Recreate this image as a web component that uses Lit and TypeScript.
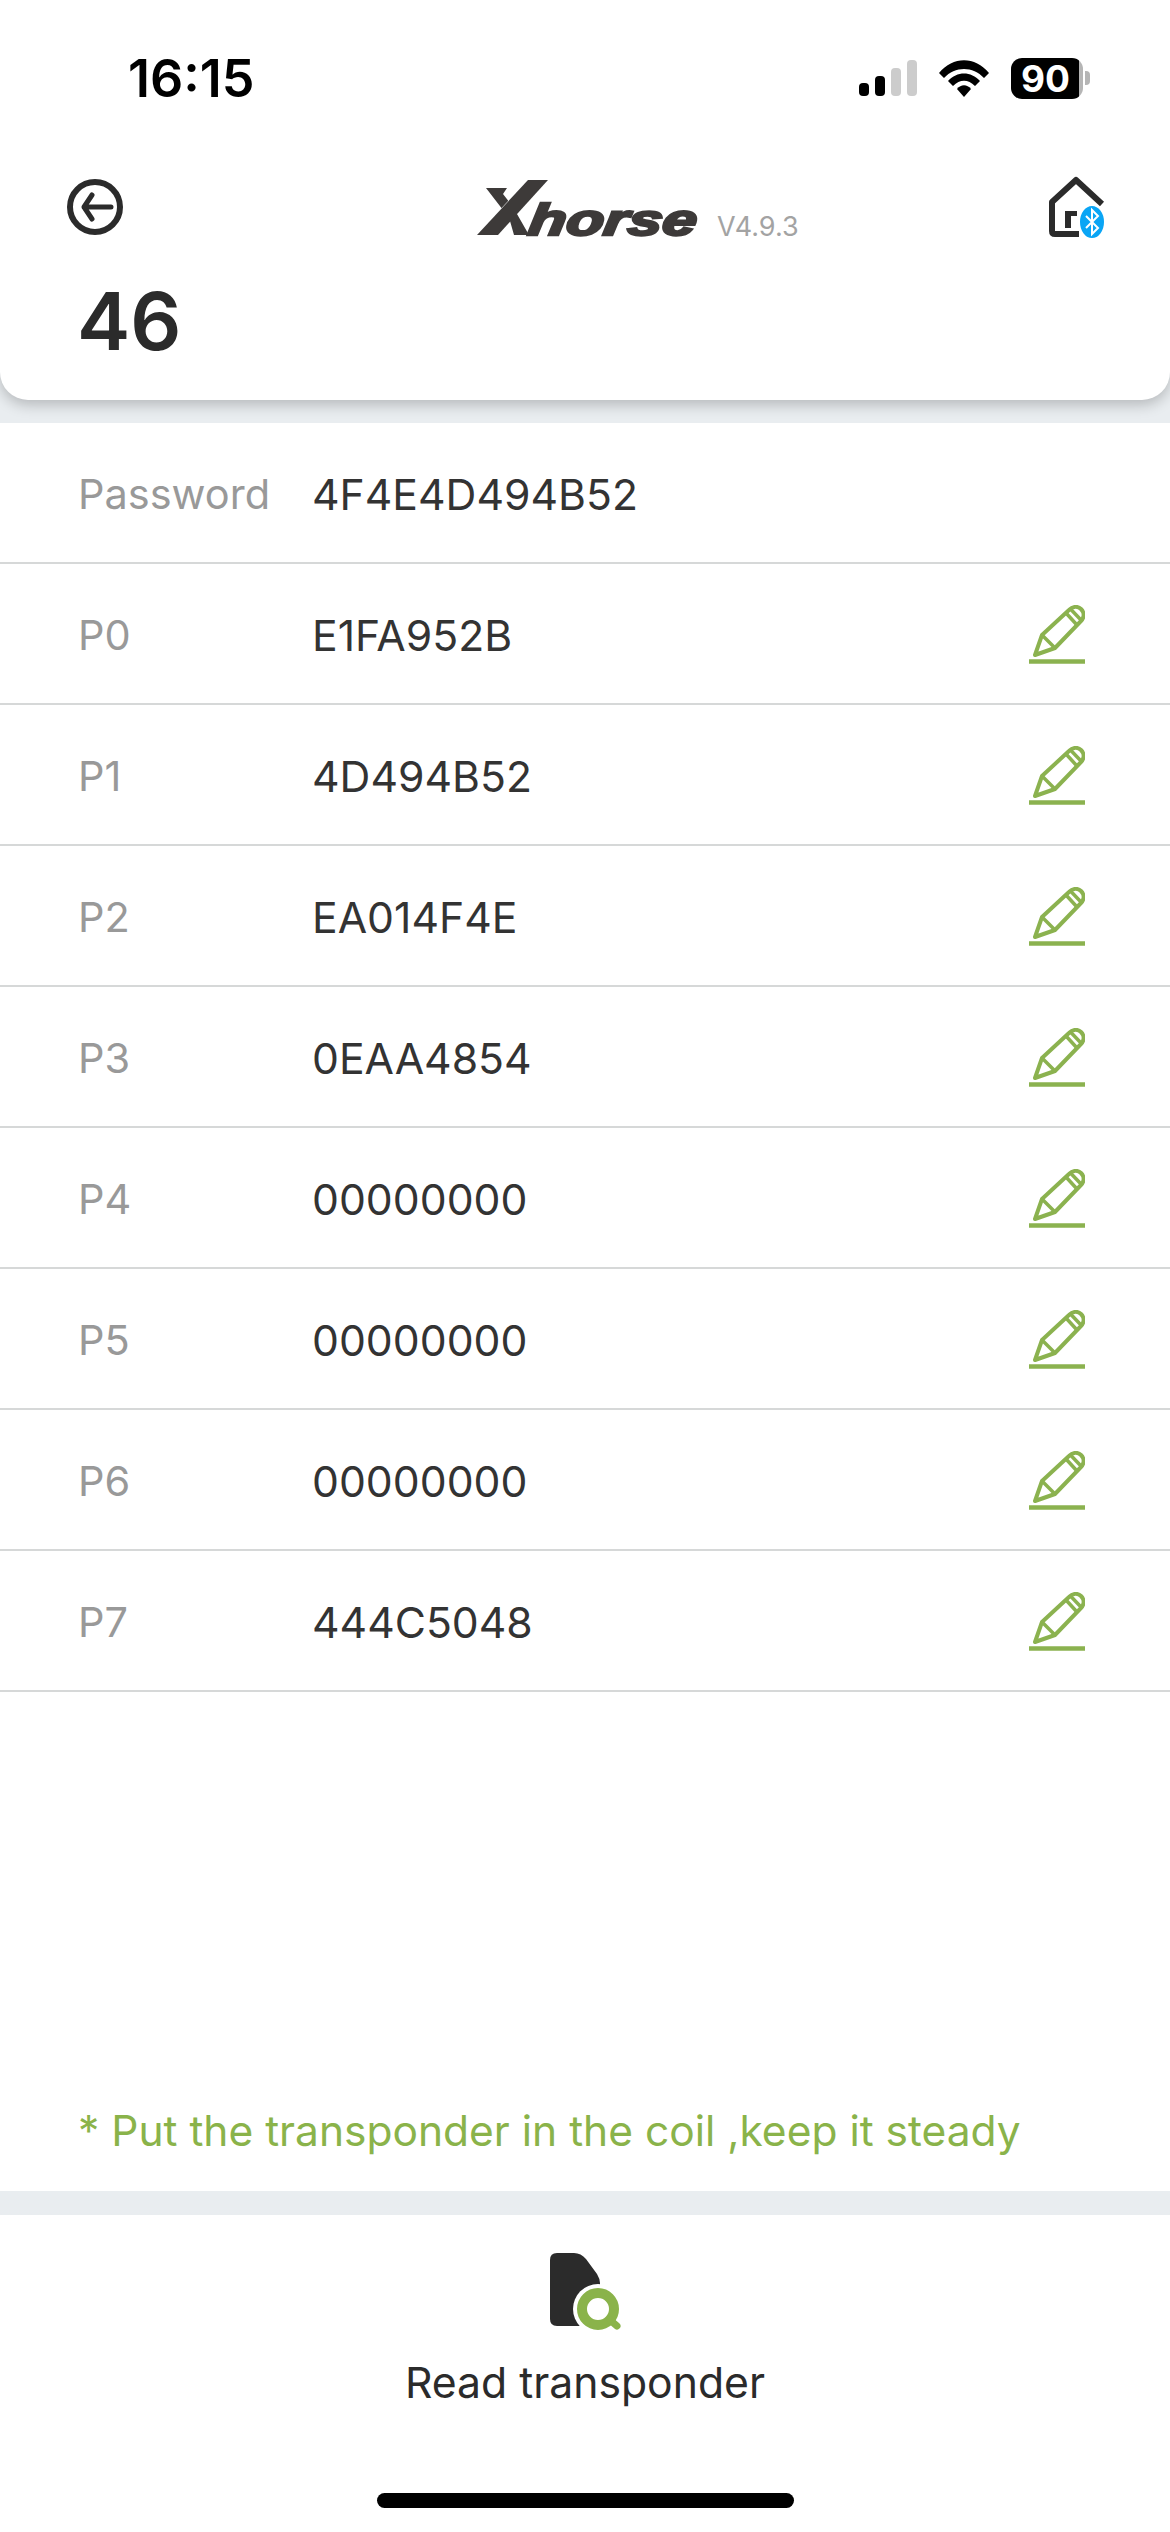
import { LitElement, html, css, svg } from "lit";
import { customElement } from "lit/decorators.js";

const ROWS = [
  { label: "Password", value: "4F4E4D494B52", editable: false },
  { label: "P0", value: "E1FA952B", editable: true },
  { label: "P1", value: "4D494B52", editable: true },
  { label: "P2", value: "EA014F4E", editable: true },
  { label: "P3", value: "0EAA4854", editable: true },
  { label: "P4", value: "00000000", editable: true },
  { label: "P5", value: "00000000", editable: true },
  { label: "P6", value: "00000000", editable: true },
  { label: "P7", value: "444C5048", editable: true },
];

const pencil = html`<svg class="pencil" width="56" height="60" viewBox="0 0 56 60">
  <path d="M0 56.500H56" fill="none" stroke="#8bb24f" stroke-width="4.500" />
  <path
    d="M6 50L13 30L40 5C44 1 49 1 52 4C56 8 55 13 52 16L26 43Z"
    fill="none"
    stroke="#8bb24f"
    stroke-width="4"
    stroke-linejoin="round"
  />
  <path d="M13 30L26 43M37 8L48 20M41.500 4L52 15" fill="none" stroke="#8bb24f" stroke-width="3.500" />
</svg>`;

@customElement("app-root")
export class AppRoot extends LitElement {
  static styles = css`
    :host {
      display: flex;
      flex-direction: column;
      width: 1170px;
      height: 2532px;
      background: #fff;
      font-family: Inter, "Noto Sans", sans-serif;
      color: #333;
    }

    .head-wrap {
      height: 423px;
      background: #e9edf0;
      overflow: hidden;
      flex: none;
    }

    .head {
      height: 400px;
      background: #fff;
      border-radius: 0 0 28px 28px;
      box-shadow: 0 5px 14px rgba(0, 0, 0, 0.22);
      display: flex;
      flex-direction: column;
    }

    .status {
      height: 156px;
      padding: 0 80px 0 128px;
      display: flex;
      align-items: center;
      gap: 22px;
      box-sizing: border-box;
    }

    .time {
      font-size: 52px;
      font-weight: 600;
      color: #000;
      margin-right: auto;
    }

    .battery {
      display: flex;
      align-items: center;
    }

    .cell {
      width: 72px;
      height: 41px;
      box-sizing: border-box;
      border-radius: 11px;
      background: linear-gradient(90deg, #000 94%, #b5b5b5 94%);
      color: #fff;
      font-size: 37px;
      font-weight: 700;
      line-height: 41px;
      padding-left: 10px;
    }

    .nub {
      width: 5px;
      height: 14px;
      margin-left: 2px;
      background: #b5b5b5;
      border-radius: 0 4px 4px 0;
    }

    .toolbar {
      height: 84px;
      margin-top: 9px;
      padding: 0 65px 0 67px;
      display: flex;
      align-items: center;
    }

    .logo {
      margin-left: 354px;
      margin-bottom: -12px;
    }

    .logo text {
      font-family: "Liberation Sans", sans-serif;
      font-size: 44px;
      font-weight: 700;
      font-style: italic;
      fill: #3d3a39;
      stroke: #3d3a39;
      stroke-width: 2.500px;
    }

    .version {
      margin-left: 14px;
      align-self: flex-end;
      margin-bottom: 6px;
      font-size: 27px;
      color: #a3a3a3;
    }

    .home {
      margin-left: auto;
    }

    .title {
      margin-top: 32px;
      padding-left: 77px;
      font-size: 80px;
      font-weight: 600;
      line-height: 80px;
      color: #2b2b2b;
    }

    .row {
      height: 141px;
      box-sizing: border-box;
      border-bottom: 2px solid #d6d8d8;
      padding: 3px 85px 0 78px;
      display: flex;
      align-items: center;
      font-size: 41.500px;
    }

    .label {
      width: 234px;
      color: #999;
      flex: none;
    }

    .value {
      flex: 1;
      color: #333;
      font-size: 42.700px;
    }

    .note {
      margin-top: auto;
      padding: 0 0 32px 78px;
      font-size: 42.500px;
      line-height: 56px;
      color: #8ab34a;
    }

    .strip {
      height: 24px;
      background: #e9edf0;
      flex: none;
    }

    .action {
      padding-top: 38px;
      display: flex;
      flex-direction: column;
      align-items: center;
    }

    .action span {
      margin-top: 27px;
      font-size: 42.700px;
      line-height: 52px;
      color: #2b2b2b;
    }

    .home-bar {
      width: 417px;
      height: 15px;
      border-radius: 8px;
      background: #000;
      margin: 84px auto 24px;
      flex: none;
    }
  `;

  render() {
    return html`
      <div class="head-wrap">
        <div class="head">
          <div class="status">
            <span class="time">16:15</span>
            <svg width="58" height="37" viewBox="0 0 58 37">
              <rect x="0" y="23" width="10" height="13" rx="4" fill="#000" />
              <rect x="16" y="16" width="10" height="20" rx="4" fill="#000" />
              <rect x="32" y="8" width="10" height="28" rx="4" fill="#ccc" />
              <rect x="48" y="0" width="10" height="36" rx="4" fill="#ccc" />
            </svg>
            <svg width="50" height="38" viewBox="0 0 50 38">
              <path d="M0 14C14 -3 36 -3 50 14L45 19C34 7 16 7 5 19Z" fill="#000" />
              <path d="M9 22C18 12 32 12 41 22L36 27C29 20 21 20 14 27Z" fill="#000" />
              <path d="M18 30C22 25 28 25 32 30L25 38Z" fill="#000" />
            </svg>
            <div class="battery">
              <div class="cell">90</div>
              <div class="nub"></div>
            </div>
          </div>
          <div class="toolbar">
            <svg width="56" height="56" viewBox="0 0 56 56">
              <circle cx="28" cy="28" r="25" fill="none" stroke="#2b2b2b" stroke-width="6" />
              <path
                d="M44 28H17M25 16L17 28L25 40"
                fill="none"
                stroke="#2b2b2b"
                stroke-width="5"
                stroke-linecap="round"
                stroke-linejoin="round"
              />
            </svg>
            <svg class="logo" width="226" height="72" viewBox="0 0 226 72">
              <path d="M9 11H30L26 17L36 30L52 58H37L33 44L26 33Z" fill="#3d3a39" />
              <path d="M33 23L20 37" stroke="#fff" stroke-width="1.500" />
              <path d="M71 3H51L0 58H21Z" fill="#3d3a39" />
              ${svg`<text transform="translate(50 58) skewX(-8)" textLength="168" lengthAdjust="spacingAndGlyphs">horse</text>`}
            </svg>
            <span class="version">V4.9.3</span>
            <svg class="home" width="56" height="62" viewBox="0 0 56 62">
              <path
                d="M30 58H6Q3 58 3 55V26L27 4L53 28"
                fill="none"
                stroke="#2b2b2b"
                stroke-width="6"
                stroke-linejoin="round"
              />
              <path d="M16 35H28V40H22V52H16Z" fill="#2b2b2b" />
              <ellipse cx="43" cy="46" rx="13" ry="17" fill="#0aa5f5" stroke="#fff" stroke-width="2" />
              <path
                d="M37 40L49 52L43 58V34L49 40L37 52"
                fill="none"
                stroke="#fff"
                stroke-width="2"
              />
            </svg>
          </div>
          <div class="title">46</div>
        </div>
      </div>

      ${ROWS.map(
        (r) => html`
          <div class="row">
            <span class="label">${r.label}</span>
            <span class="value">${r.value}</span>
            ${r.editable ? pencil : null}
          </div>
        `
      )}

      <div class="note">* Put the transponder in the coil ,keep it steady</div>
      <div class="strip"></div>

      <div class="action">
        <svg width="71" height="77" viewBox="0 0 71 77">
          <path
            d="M7 0H24Q31 0 36 6L47 21Q50 26 50 30V60H30V73H7Q0 73 0 66V7Q0 0 7 0Z"
            fill="#2b2b2b"
          />
          <circle cx="48" cy="56" r="25" fill="#fff" />
          <circle cx="48" cy="56" r="16" fill="none" stroke="#8ab34a" stroke-width="10" />
          <path d="M60 67L67 73" stroke="#8ab34a" stroke-width="7" stroke-linecap="round" />
        </svg>
        <span>Read transponder</span>
      </div>
      <div class="home-bar"></div>
    `;
  }
}
